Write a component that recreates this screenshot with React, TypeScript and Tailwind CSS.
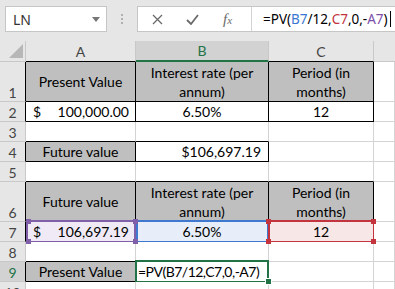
import * as React from 'react'

type Cell = {
  text?: React.ReactNode
  gray?: boolean
  align?: 'center' | 'right' | 'left' | 'acct'
  box?: boolean
  bg?: string
}

const CELL_FONT = { fontFamily: 'Lato, "Liberation Sans", sans-serif' }
const UI_FONT = { fontFamily: '"Noto Sans", "Open Sans", sans-serif' }

const acct = (v: string) => (
  <>
    <span>$</span>
    <span>{v}</span>
  </>
)

const wrap = (a: string, b: string) => (
  <span className="flex flex-col items-center leading-[19px]">
    <span>{a}</span>
    <span>{b}</span>
  </span>
)

// rows 1..10, columns A..D
const rows: { n: number; h: string; cells: Cell[] }[] = [
  {
    n: 1,
    h: 'h-[40px]',
    cells: [
      { text: 'Present Value', gray: true, align: 'center', box: true },
      { text: wrap('Interest rate (per', 'annum)'), gray: true, align: 'center', box: true },
      { text: wrap('Period (in', 'months)'), gray: true, align: 'center', box: true },
      {},
    ],
  },
  {
    n: 2,
    h: 'h-[20px]',
    cells: [
      { text: acct('100,000.00'), align: 'acct', box: true },
      { text: '6.50%', align: 'center', box: true },
      { text: '12', align: 'center', box: true },
      {},
    ],
  },
  { n: 3, h: 'h-[20px]', cells: [{}, {}, {}, {}] },
  {
    n: 4,
    h: 'h-[20px]',
    cells: [
      { text: 'Future value', gray: true, align: 'center', box: true },
      { text: '$106,697.19', align: 'right', box: true },
      {},
      {},
    ],
  },
  { n: 5, h: 'h-[20px]', cells: [{}, {}, {}, {}] },
  {
    n: 6,
    h: 'h-[40px]',
    cells: [
      { text: 'Future value', gray: true, align: 'center', box: true },
      { text: wrap('Interest rate (per', 'annum)'), gray: true, align: 'center', box: true },
      { text: wrap('Period (in', 'months)'), gray: true, align: 'center', box: true },
      {},
    ],
  },
  {
    n: 7,
    h: 'h-[20px]',
    cells: [
      { text: acct('106,697.19'), align: 'acct', box: true, bg: 'bg-[#efeaf5]' },
      { text: '6.50%', align: 'center', box: true, bg: 'bg-[#e7eef9]' },
      { text: '12', align: 'center', box: true, bg: 'bg-[#f8e7e7]' },
      {},
    ],
  },
  { n: 8, h: 'h-[20px]', cells: [{}, {}, {}, {}] },
  {
    n: 9,
    h: 'h-[20px]',
    cells: [
      { text: 'Present Value', gray: true, align: 'center', box: true },
      { text: '=PV(B7/12,C7,0,-A7)', align: 'left', box: true },
      {},
      {},
    ],
  },
  { n: 10, h: 'h-[20px]', cells: [{}, {}, {}, {}] },
]

const widths = ['w-[110px]', 'w-[133px]', 'w-[105px]', 'flex-1']

function isBox(r: number, c: number) {
  return !!rows[r]?.cells[c]?.box
}

function Handle({ className }: { className: string }) {
  return <span className={`absolute z-10 h-[5px] w-[5px] ${className}`} />
}

function Overlay({ r, c }: { r: number; c: number }) {
  const n = rows[r].n
  if (n === 7 && c === 0)
    return (
      <>
        <span className="absolute -top-[2px] left-0 h-[23px] w-[110px] border-2 border-[#7e5fa8]" />
        <Handle className="-top-[3px] left-0 bg-[#7e5fa8]" />
        <Handle className="-top-[3px] left-[107px] bg-[#7e5fa8]" />
        <Handle className="top-[17px] left-0 bg-[#7e5fa8]" />
        <Handle className="top-[17px] left-[107px] bg-[#7e5fa8]" />
      </>
    )
  if (n === 7 && c === 1)
    return <span className="absolute -top-[2px] left-0 h-[23px] w-[133px] border-2 border-[#3e78cf]" />
  if (n === 7 && c === 2)
    return (
      <>
        <span className="absolute -top-[2px] -left-px h-[23px] w-[107px] border-2 border-[#c4343f]" />
        <Handle className="-top-[3px] -left-[3px] bg-[#c4343f]" />
        <Handle className="-top-[3px] left-[102px] bg-[#c4343f]" />
        <Handle className="top-[17px] -left-[3px] bg-[#c4343f]" />
        <Handle className="top-[17px] left-[102px] bg-[#c4343f]" />
      </>
    )
  if (n === 9 && c === 1)
    return (
      <>
        <span className="absolute -top-[2px] -left-px h-[23px] w-[134px] border-2 border-[#217346]" />
        <span className="absolute top-[16px] left-[129px] z-10 h-[7px] w-[7px] border border-white bg-[#217346]" />
      </>
    )
  return null
}

function Row({ r }: { r: number }) {
  const row = rows[r]
  const active = row.n === 9
  return (
    <div className={`flex ${row.h}`}>
      <div
        className={`flex w-[26px] shrink-0 items-end justify-center border-b border-r border-b-[#c8c8c8] pb-[1px] text-[14px] leading-none ${
          isBox(r, 0) ? 'border-r-black' : 'border-r-[#c8c8c8]'
        } ${active ? 'bg-[#d2d2d2] text-[#217346]' : 'bg-[#e6e6e6] text-[#444]'}`}
      >
        {row.n}
      </div>
      {row.cells.map((cell, c) => {
        const right = isBox(r, c) || isBox(r, c + 1)
        const bottom = isBox(r, c) || isBox(r + 1, c)
        const alignCls =
          cell.align === 'center'
            ? 'justify-center'
            : cell.align === 'right'
              ? 'justify-end pr-[7px]'
              : cell.align === 'acct'
                ? 'justify-between pl-[7px] pr-[6px]'
                : 'justify-start pl-[2px] tracking-[-0.5px]'
        return (
          <div
            key={c}
            className={`relative flex shrink-0 items-center whitespace-nowrap border-b border-r text-[14px] text-black ${widths[c]} ${alignCls} ${
              right ? 'border-r-black' : 'border-r-[#d4d4d4]'
            } ${bottom ? 'border-b-black' : 'border-b-[#d4d4d4]'} ${
              cell.gray ? 'bg-[#bfbfbf]' : cell.bg ?? 'bg-white'
            }`}
          >
            {cell.text}
            <Overlay r={r} c={c} />
          </div>
        )
      })}
    </div>
  )
}

function FormulaBar() {
  return (
    <div className="flex h-[41px] items-start bg-[#e6e6e6] pt-[6px]" style={UI_FONT}>
      <div className="ml-[5px] flex h-[26px] w-[102px] items-center justify-between border border-[#c6c6c6] bg-white pl-[7px] pr-[6px]">
        <span className="text-[14px] text-[#333]">LN</span>
        <svg width="8" height="5" viewBox="0 0 8 5">
          <path d="M0 0h8L4 5z" fill="#777" />
        </svg>
      </div>
      <div className="flex h-[26px] w-[30px] flex-col items-center justify-center gap-[2px]">
        <span className="h-[2px] w-[2px] bg-[#b0b0b0]" />
        <span className="h-[2px] w-[2px] bg-[#b0b0b0]" />
        <span className="h-[2px] w-[2px] bg-[#b0b0b0]" />
      </div>
      <div className="flex h-[26px] flex-1 items-center border-y border-l border-[#c6c6c6] bg-white">
        <div className="flex w-[113px] items-center">
          <svg className="ml-[14px]" width="11" height="11" viewBox="0 0 11 11">
            <path d="M1 1l9 9M10 1l-9 9" stroke="#6a6a6a" strokeWidth="1.3" />
          </svg>
          <svg className="ml-[23px]" width="13" height="11" viewBox="0 0 13 11">
            <path d="M1 6l4 4 7-9" stroke="#6a6a6a" strokeWidth="1.8" fill="none" />
          </svg>
          <span
            className="ml-[24px] text-[15px] italic text-[#6a6a6a]"
            style={{ fontFamily: '"Liberation Serif", serif' }}
          >
            f<span className="text-[11px]">x</span>
          </span>
        </div>
        <div className="h-full w-px bg-[#d4d4d4]" />
        <div className="ml-[11px] flex items-center text-[13.5px] text-black">
          <span>=PV(</span>
          <span className="text-[#3b77d0]">B7</span>
          <span>/12,</span>
          <span className="text-[#c2333d]">C7</span>
          <span>,0,-</span>
          <span className="text-[#7b4fa8]">A7</span>
          <span>)</span>
          <span className="ml-[2px] h-[16px] w-px bg-black" />
        </div>
      </div>
    </div>
  )
}

function Header() {
  return (
    <div className="flex h-[21px] bg-[#e6e6e6] text-[14px] text-[#444]">
      <div className="flex w-[26px] shrink-0 items-end justify-end border-b border-r border-[#c8c8c8] pb-[3px] pr-[2px]">
        <svg width="14" height="14" viewBox="0 0 14 14">
          <path d="M14 0V14H0z" fill="#b7b7b7" />
        </svg>
      </div>
      <div className="flex w-[110px] shrink-0 items-center justify-center border-b border-r border-b-black border-r-[#c8c8c8]">
        A
      </div>
      <div className="flex w-[133px] shrink-0 items-center justify-center border-b-2 border-r border-b-[#217346] border-r-[#c8c8c8] bg-[#d2d2d2] text-[#217346]">
        B
      </div>
      <div className="flex w-[105px] shrink-0 items-center justify-center border-b border-r border-b-black border-r-[#c8c8c8]">
        C
      </div>
      <div className="flex-1 border-b border-[#c8c8c8]" />
    </div>
  )
}

export default function App() {
  return (
    <div className="h-[289px] w-[395px] overflow-hidden bg-white">
      <FormulaBar />
      <div style={CELL_FONT}>
        <Header />
        {rows.map((_, r) => (
          <Row key={r} r={r} />
        ))}
      </div>
    </div>
  )
}
